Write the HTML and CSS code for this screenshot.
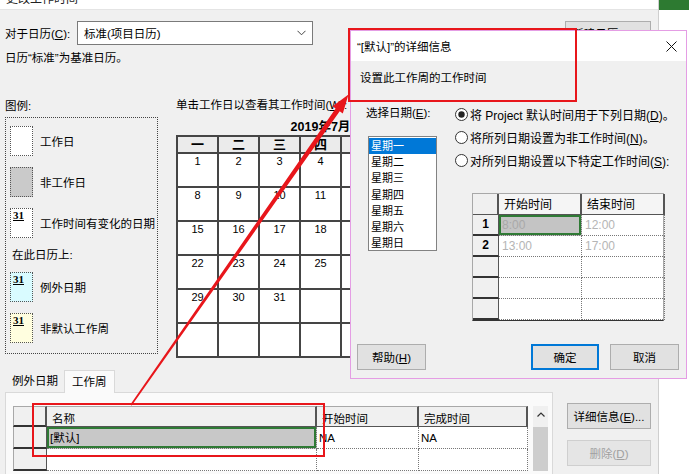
FILE: index.html
```html
<!DOCTYPE html>
<html lang="zh-CN">
<head>
<meta charset="utf-8">
<title>更改工作时间</title>
<link rel="stylesheet" href="styles.css">
</head>
<body>
<div class="screen">
  <div class="base">
    <div class="titlebar"><span class="title-frag">更改工作时间</span></div>
    <div class="row-cal">
      <span class="lbl">对于日历(<u>C</u>):</span>
      <div class="select"><span>标准(项目日历)</span>
        <svg width="9" height="6" viewBox="0 0 9 6"><path d="M0.5 0.8 L4.5 4.8 L8.5 0.8" fill="none" stroke="#444" stroke-width="1"/></svg>
      </div>
      <button class="btn btn-new">新建日历(<u>N</u>)...</button>
    </div>
    <div class="base-note">日历“标准”为基准日历。</div>
    <div class="main">
      <div class="legend-col">
        <div class="cap">图例:</div>
        <div class="legend">
          <div class="lg-item"><span class="sw"></span><span>工作日</span></div>
          <div class="lg-item"><span class="sw sw-non"></span><span>非工作日</span></div>
          <div class="lg-item"><span class="sw"><b>31</b></span><span>工作时间有变化的日期</span></div>
          <div class="lg-sub">在此日历上:</div>
          <div class="lg-item lg-first"><span class="sw sw-exc"><b>31</b></span><span>例外日期</span></div>
          <div class="lg-item"><span class="sw sw-week"><b>31</b></span><span>非默认工作周</span></div>
        </div>
      </div>
      <div class="cal-col">
        <div class="cap">单击工作日以查看其工作时间(<u>W</u>):</div>
        <div class="month">2019年7月</div>
        <div class="cal">
          <div class="ch">一</div><div class="ch">二</div><div class="ch">三</div><div class="ch">四</div><div class="ch">五</div><div class="ch">六</div><div class="ch">日</div>
          <div class="cd">1</div><div class="cd">2</div><div class="cd">3</div><div class="cd">4</div><div class="cd">5</div><div class="cd off">6</div><div class="cd off">7</div>
          <div class="cd">8</div><div class="cd">9</div><div class="cd">10</div><div class="cd">11</div><div class="cd">12</div><div class="cd off">13</div><div class="cd off">14</div>
          <div class="cd">15</div><div class="cd">16</div><div class="cd">17</div><div class="cd">18</div><div class="cd">19</div><div class="cd off">20</div><div class="cd off">21</div>
          <div class="cd">22</div><div class="cd">23</div><div class="cd">24</div><div class="cd">25</div><div class="cd">26</div><div class="cd off">27</div><div class="cd off">28</div>
          <div class="cd">29</div><div class="cd">30</div><div class="cd">31</div><div class="cd"></div><div class="cd"></div><div class="cd"></div><div class="cd"></div>
          <div class="cd"></div><div class="cd"></div><div class="cd"></div><div class="cd"></div><div class="cd"></div><div class="cd"></div><div class="cd"></div>
        </div>
      </div>
    </div>
    <div class="bottom">
      <div class="tabs-wrap">
        <div class="tabs"><span class="tab">例外日期</span><span class="tab active">工作周</span></div>
        <div class="panel">
          <div class="wgrid">
            <div class="wg-h wg-rh"></div><div class="wg-h">名称</div><div class="wg-h">开始时间</div><div class="wg-h">完成时间</div><div class="wg-gap"></div><div class="wg-sb wg-up"><svg width="8" height="5" viewBox="0 0 8 5"><path d="M0.5 4.5 L4 1 L7.5 4.5" fill="none" stroke="#333" stroke-width="1.2"/></svg></div>
            <div class="wg-rh"></div><div class="wg-d wg-sel">[默认]</div><div class="wg-d">NA</div><div class="wg-d">NA</div><div class="wg-gap"></div><div class="wg-sb wg-thumb"></div>
            <div class="wg-rh"></div><div class="wg-d"></div><div class="wg-d"></div><div class="wg-d"></div><div class="wg-gap"></div><div class="wg-sb wg-thumb"></div>
          </div>
        </div>
      </div>
      <div class="side-btns">
        <button class="btn">详细信息(<u>E</u>)...</button>
        <button class="btn disabled">删除(<u>D</u>)</button>
      </div>
    </div>
  </div>
  <div class="outside"><div class="green"></div></div>

  <div class="dialog">
    <div class="dlg-title"><span>“[默认]”的详细信息</span>
      <svg width="11" height="11" viewBox="0 0 11 11"><path d="M0.5 0.5 L10.5 10.5 M10.5 0.5 L0.5 10.5" stroke="#111" stroke-width="1"/></svg>
    </div>
    <div class="dlg-sub">设置此工作周的工作时间</div>
    <div class="dlg-main">
      <div class="dlg-left">
        <div class="dlg-lbl">选择日期(<u>E</u>):</div>
        <div class="listbox">
          <div class="li sel">星期一</div>
          <div class="li">星期二</div>
          <div class="li">星期三</div>
          <div class="li">星期四</div>
          <div class="li">星期五</div>
          <div class="li">星期六</div>
          <div class="li">星期日</div>
        </div>
      </div>
      <div class="dlg-right">
        <div class="radio"><svg width="13" height="13" viewBox="0 0 13 13"><circle cx="6.5" cy="6.5" r="6" fill="#fff" stroke="#333"/><circle cx="6.5" cy="6.5" r="3.2" fill="#222"/></svg><span>将 Project 默认时间用于下列日期(<u>D</u>)。</span></div>
        <div class="radio"><svg width="13" height="13" viewBox="0 0 13 13"><circle cx="6.5" cy="6.5" r="6" fill="#fff" stroke="#333"/></svg><span>将所列日期设置为非工作时间(<u>N</u>)。</span></div>
        <div class="radio"><svg width="13" height="13" viewBox="0 0 13 13"><circle cx="6.5" cy="6.5" r="6" fill="#fff" stroke="#333"/></svg><span>对所列日期设置以下特定工作时间(<u>S</u>):</span></div>
        <div class="tg">
          <div class="tg-h tg-rh"></div><div class="tg-h">开始时间</div><div class="tg-h">结束时间</div>
          <div class="tg-rh">1</div><div class="tg-d tg-sel">8:00</div><div class="tg-d">12:00</div>
          <div class="tg-rh">2</div><div class="tg-d">13:00</div><div class="tg-d">17:00</div>
          <div class="tg-rh"></div><div class="tg-d"></div><div class="tg-d"></div>
          <div class="tg-rh"></div><div class="tg-d"></div><div class="tg-d"></div>
          <div class="tg-rh"></div><div class="tg-d"></div><div class="tg-d"></div>
        </div>
      </div>
    </div>
    <div class="dlg-btns">
      <button class="btn dbtn">帮助(<u>H</u>)</button>
      <span class="spacer"></span>
      <button class="btn dbtn ok">确定</button>
      <button class="btn dbtn">取消</button>
    </div>
  </div>

  <div class="redbox rb1"></div>
  <div class="redbox rb2"></div>
  <svg class="arrow" width="689" height="474" viewBox="0 0 689 474">
    <polygon points="130.2,404.8 131.8,405.6 339.7,111.2 342.8,113.4 348.5,94.5 332.6,106.2 335.6,108.4" fill="#e8161b"/>
  </svg>
</div>
</body>
</html>
```

FILE: styles.css
```css
* { box-sizing: border-box; }
html, body { margin: 0; padding: 0; }
body {
  width: 689px;
  height: 474px;
  overflow: hidden;
  background: #fff;
  font-family: "Liberation Sans", "Noto Sans CJK SC", sans-serif;
  font-size: 11.5px;
  color: #000;
}
u { text-decoration: underline; }

.screen {
  position: relative;
  width: 689px;
  height: 474px;
  display: flex;
}

/* ---------- base dialog ---------- */
.base {
  width: 659px;
  height: 474px;
  background: #f0f0f0;
  border-right: 1px solid #cfcfcf;
  flex: none;
}
.titlebar {
  height: 10px;
  background: #fff;
  overflow: hidden;
  padding-left: 6px;
  border-bottom: 1px solid #e4e4e4;
}
.title-frag {
  display: block;
  margin-top: -9px;
  font-size: 12px;
  line-height: 16px;
  color: #222;
}
.outside {
  flex: 1;
  background: #fff;
}
.green {
  height: 10px;
  background: #2d7a31;
}

.row-cal {
  display: flex;
  align-items: center;
  margin-top: 11px;
  padding-left: 5px;
  padding-right: 7px;
  height: 24px;
}
.lbl { width: 72px; }
.select {
  width: 236px;
  height: 24px;
  background: #fff;
  border: 1px solid #7a7a7a;
  display: flex;
  align-items: center;
  justify-content: space-between;
  padding: 0 6px 0 6px;
}
.btn {
  font-family: inherit;
  font-size: 11.5px;
  color: #000;
  background: #e1e1e1;
  border: 1px solid #adadad;
  padding: 0;
  height: 26px;
}
.btn-new {
  margin-left: auto;
  width: 86px;
  height: 24px;
}
.base-note {
  margin-top: 5px;
  padding-left: 5px;
  line-height: 16px;
}

.main {
  display: flex;
  margin-top: 31px;
  padding-left: 5px;
}
.cap { line-height: 16px; }
.legend-col { width: 153px; }
.legend-col .cap { padding-top: 1px; }
.legend {
  margin-top: 3px;
  height: 237px;
  border: 1px dotted #444;
  padding: 8px 0 0 4px;
}
.lg-item {
  display: flex;
  align-items: center;
  gap: 7px;
  height: 30px;
  margin-bottom: 11px;
}
.lg-first { margin-bottom: 11px; }
.sw {
  width: 23px;
  height: 30px;
  border: 1px dotted #555;
  background: #fff;
  position: relative;
  padding: 1px 0 0 2px;
  flex: none;
}
.sw b {
  display: block;
  font-family: "Liberation Serif", serif;
  font-weight: bold;
  font-size: 11px;
  line-height: 11px;
  text-decoration: underline;
}
.sw-non { background: #cacaca; }
.sw-exc { background: #d9fbff; }
.sw-week { background: #fffedf; }
.lg-sub {
  margin-top: -2px;
  margin-bottom: 9px;
  padding-left: 2px;
  line-height: 16px;
}

.cal-col {
  margin-left: 18px;
}
.month {
  margin-top: 6px;
  width: 289px;
  text-align: center;
  font-weight: bold;
  font-size: 12.5px;
  line-height: 16px;
}
.cal {
  display: grid;
  grid-template-columns: repeat(7, 39px);
  grid-template-rows: 15px repeat(6, 32px);
  gap: 2px;
  padding: 2px;
  background: #454545;
  width: 289px;
}
.ch {
  background: #ebebeb;
  text-align: center;
  font-weight: bold;
  font-size: 13px;
  line-height: 15px;
  overflow: hidden;
}
.cd {
  background: #fff;
  text-align: center;
  font-size: 11px;
  line-height: 13px;
  padding-top: 1px;
}
.cd.off { background: #cacaca; }

/* ---------- bottom ---------- */
.bottom {
  display: flex;
  margin-top: 12px;
  padding-left: 5px;
}
.tabs-wrap { width: 548px; }
.tabs {
  display: flex;
  align-items: flex-end;
  height: 22px;
  padding-left: 3px;
}
.tab {
  padding: 0 4px;
  line-height: 18px;
  margin-bottom: 2px;
}
.tab.active {
  margin-left: 2px;
  margin-bottom: -1px;
  padding: 0 7px;
  line-height: 22px;
  background: #fafafa;
  border: 1px solid #d9d9d9;
  border-bottom: none;
  position: relative;
}
.panel {
  height: 90px;
  background: #fafafa;
  border: 1px solid #d9d9d9;
  padding: 13px 0 0 7px;
}
.wgrid {
  display: grid;
  grid-template-columns: 34px 270px 102px 109px 5px 15px;
  grid-template-rows: 21px 22px 22px;
  width: 535px;
}
.wg-h {
  background: #f0f0f0;
  border-top: 1px solid #a8a8a8;
  border-right: 2px solid #555;
  border-bottom: 1px solid #555;
  padding: 4px 0 0 5px;
  line-height: 16px;
}
.wg-rh {
  background: #f0f0f0;
  border-left: 1px solid #a8a8a8;
  border-right: 1px solid #555;
  border-bottom: 2px solid #333;
}
.wg-h.wg-rh { border-right: 2px solid #555; border-bottom: 2px solid #333; }
.wg-d {
  background: #fff;
  border-right: 1px dotted #777;
  border-bottom: 1px dotted #777;
  padding: 3px 0 0 2px;
  line-height: 16px;
}
.wg-sel {
  background: #c8c8c8;
  box-shadow: inset 0 0 0 2px #2f7a35;
  padding-left: 3px;
}
.wg-gap { background: #fafafa; }
.wg-sb { background: #cdcdcd; }
.wg-up {
  background: #f0f0f0;
  display: flex;
  justify-content: center;
  padding-top: 6px;
}
.wg-thumb { background: #cdcdcd; }

.side-btns {
  margin-left: 14px;
  margin-top: 33px;
  display: flex;
  flex-direction: column;
  gap: 11px;
}
.side-btns .btn { width: 84px; height: 26px; }
.btn.disabled {
  color: #a0a0a0;
  background: #e5e5e5;
  border-color: #cfcfcf;
}

/* ---------- overlay dialog ---------- */
.dialog {
  position: absolute;
  left: 350px;
  top: 30px;
  width: 337px;
  height: 349px;
  background: #f0f0f0;
  border: 1px solid #e49de4;
  display: flex;
  flex-direction: column;
  z-index: 2;
}
.dlg-title {
  height: 30px;
  background: #fff;
  display: flex;
  align-items: center;
  justify-content: space-between;
  padding: 0 9px 0 6px;
}
.dlg-sub {
  height: 34px;
  line-height: 34px;
  padding-left: 9px;
}
.dlg-main {
  display: flex;
}
.dlg-left {
  width: 104px;
  padding-left: 15px;
}
.dlg-lbl {
  margin-top: 10px;
  line-height: 16px;
}
.listbox {
  margin-top: 15px;
  margin-left: 2px;
  width: 69px;
  height: 115px;
  background: #fff;
  border: 1px solid #828282;
  padding-top: 1px;
}
.li {
  height: 16.2px;
  line-height: 16px;
  padding-left: 2px;
  font-size: 11px;
  overflow: hidden;
}
.li.sel { background: #0078d7; color: #fff; }
.dlg-right {
  padding-top: 8px;
}
.radio {
  height: 23px;
  display: flex;
  align-items: center;
  gap: 2px;
  font-size: 12px;
}
.tg {
  margin-top: 21px;
  margin-left: 17px;
  display: grid;
  grid-template-columns: 26px 83px 83px;
  grid-auto-rows: 21px;
  width: 192px;
  border-top: 1px solid #a8a8a8;
  border-left: 1px solid #a8a8a8;
  border-right: 1px solid #a8a8a8;
  border-bottom: 1px solid #333;
  background: #fff;
}
.tg-h {
  background: #f5f5f5;
  border-right: 2px solid #555;
  border-bottom: 1px solid #555;
  padding: 3px 0 0 5px;
  line-height: 16px;
  font-size: 12px;
}
.tg-rh {
  background: #f0f0f0;
  border-right: 1px solid #555;
  border-bottom: 2px solid #333;
  text-align: center;
  font-weight: bold;
  font-size: 12px;
  line-height: 19px;
}
.tg-h.tg-rh { border-right: 2px solid #555; border-bottom: 1px solid #555; }
.tg-d {
  border-right: 1px dotted #777;
  border-bottom: 1px dotted #777;
  color: #b5b5b5;
  padding: 2px 0 0 3px;
  line-height: 16px;
  font-size: 12px;
}
.tg-sel {
  background: #c4c4c4;
  box-shadow: inset 0 0 0 2px #2f7a35;
  color: #a9a9a9;
}
.dlg-btns {
  margin-top: auto;
  display: flex;
  padding: 0 7px 8px 6px;
  gap: 11px;
}
.spacer { flex: 1; }
.dbtn { width: 69px; height: 26px; }
.dbtn.ok {
  width: 68px;
  border: 2px solid #0078d7;
}

/* ---------- annotations ---------- */
.redbox {
  position: absolute;
  border: 2px solid #e8161b;
  z-index: 3;
}
.rb1 { left: 348px; top: 28px; width: 229px; height: 74px; }
.rb2 { left: 32px; top: 403px; width: 293px; height: 54px; }
.arrow {
  position: absolute;
  left: 0;
  top: 0;
  z-index: 4;
  pointer-events: none;
}
```
